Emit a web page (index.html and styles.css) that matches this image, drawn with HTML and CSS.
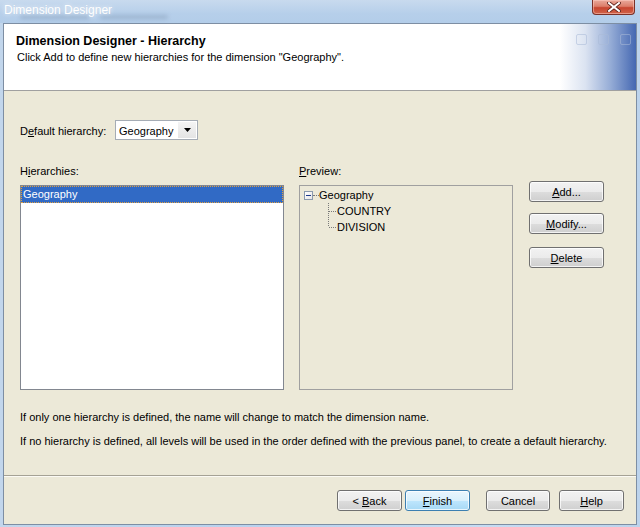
FILE: index.html
```html
<!DOCTYPE html>
<html>
<head>
<meta charset="utf-8">
<title>Dimension Designer</title>
<link rel="stylesheet" href="styles.css">
</head>
<body>
<div class="window">
  <div class="titlebar">
    <span class="title">Dimension Designer</span>
    <span class="ghost ghost-a"></span>
    <span class="ghost ghost-b"></span>
    <div class="close">
      <svg width="14" height="10" viewBox="0 0 14 10"><path d="M2 1 L12 9 M12 1 L2 9" stroke="#5a2018" stroke-width="3.6" stroke-linecap="square"/><path d="M2 1 L12 9 M12 1 L2 9" stroke="#ffffff" stroke-width="2" stroke-linecap="square"/></svg>
    </div>
  </div>
  <div class="client">
    <div class="header">
      <div class="h-title">Dimension Designer - Hierarchy</div>
      <div class="h-sub">Click Add to define new hierarchies for the dimension "Geography".</div>
      <div class="marks"><span></span><span></span><span></span></div>
    </div>
    <div class="body">
      <div class="default-row">
        <span class="label">D<u>e</u>fault hierarchy:</span>
        <div class="combo">
          <span class="combo-text">Geography</span>
          <span class="combo-btn"><svg width="7" height="4" viewBox="0 0 7 4"><path d="M0 0 H7 L3.5 4 Z" fill="#000"/></svg></span>
        </div>
      </div>
      <div class="panels">
        <div class="label lbl-list">H<u>i</u>erarchies:</div>
        <div class="label lbl-prev"><u>P</u>review:</div>
        <div class="side-btns">
          <button class="btn btn-add"><u>A</u>dd...</button>
          <button class="btn btn-modify"><u>M</u>odify...</button>
          <button class="btn btn-delete"><u>D</u>elete</button>
        </div>
        <div class="listbox">
          <div class="item selected">Geography</div>
        </div>
        <div class="tree">
          <div class="tree-root">
            <span class="expander"><span class="minus"></span></span>
            <span class="root-dots"></span>
            <span class="node-text">Geography</span>
          </div>
          <div class="tree-child">
            <svg class="conn" width="9" height="16" viewBox="0 0 9 16"><path d="M0.5 0 V16 M1 8.5 H9" stroke="#7a7a7a" stroke-width="1" stroke-dasharray="1 1" fill="none"/></svg>
            <span class="node-text">COUNTRY</span>
          </div>
          <div class="tree-child">
            <svg class="conn" width="9" height="16" viewBox="0 0 9 16"><path d="M0.5 0 V8 M1 8.5 H9" stroke="#7a7a7a" stroke-width="1" stroke-dasharray="1 1" fill="none"/></svg>
            <span class="node-text">DIVISION</span>
          </div>
        </div>
      </div>
      <p class="note note-1">If only one hierarchy is defined, the name will change to match the dimension name.</p>
      <p class="note note-2">If no hierarchy is defined, all levels will be used in the order defined with the previous panel, to create a default hierarchy.</p>
    </div>
    <div class="footer">
      <button class="btn btn-foot">&lt; <u>B</u>ack</button>
      <button class="btn btn-foot btn-default"><u>F</u>inish</button>
      <button class="btn btn-foot btn-cancel">Cancel</button>
      <button class="btn btn-foot btn-help"><u>H</u>elp</button>
    </div>
  </div>
</div>
</body>
</html>
```

FILE: styles.css
```css
* { box-sizing: border-box; }

html, body {
  margin: 0;
  padding: 0;
  width: 640px;
  height: 527px;
  overflow: hidden;
}

body {
  font-family: "Liberation Sans", Arial, sans-serif;
  font-size: 11px;
  color: #000;
}

.window {
  width: 640px;
  height: 527px;
  display: flex;
  flex-direction: column;
  background: linear-gradient(to right, #c2d6ec 0%, #b9d2ee 40%, #c6dcf3 75%, #bcd3ec 100%);
}

/* ---------- title bar ---------- */
.titlebar {
  position: relative;
  height: 23px;
  flex: none;
  display: flex;
  align-items: flex-start;
  background: linear-gradient(to bottom, #c8daee 0%, #b6cfea 60%, #b3cde9 100%);
}

.title {
  position: relative;
  z-index: 1;
  margin: 3px 0 0 4px;
  font-size: 12px;
  line-height: 15px;
  color: #ffffff;
  text-shadow: 0 0 4px rgba(255, 255, 255, 0.9), 0 0 1px rgba(160, 190, 220, 0.8);
}

.ghost {
  position: absolute;
  height: 4px;
  background: rgba(90, 110, 140, 0.28);
  filter: blur(2px);
  border-radius: 2px;
}
.ghost-a { left: 20px; top: 15px; width: 70px; }
.ghost-b { left: 100px; top: 15px; width: 68px; }

.close {
  margin-left: auto;
  margin-right: 5px;
  width: 43px;
  height: 15px;
  border: 1px solid #7a3128;
  border-top: none;
  border-radius: 0 0 4px 4px;
  background: linear-gradient(to bottom, #e9a99b 0%, #dc7e6a 45%, #c7452f 55%, #d0644a 100%);
  box-shadow: inset 0 0 0 1px rgba(255, 210, 200, 0.5);
  display: flex;
  align-items: center;
  justify-content: center;
}

/* ---------- client area ---------- */
.client {
  flex: 1;
  margin: 0 3px 2px 3px;
  border: 1px solid #7d8ea3;
  display: flex;
  flex-direction: column;
  background: #ece9d8;
}

.header {
  position: relative;
  height: 67px;
  flex: none;
  padding: 10px 0 0 12px;
  border-bottom: 1px solid #a0a0a0;
  background: linear-gradient(to right, #ffffff 0%, #ffffff 88%, #dbe3f1 92%, #95acd6 96%, #4568b2 100%);
}

.h-title {
  font-size: 12.5px;
  font-weight: bold;
  line-height: 15px;
}

.h-sub {
  margin-top: 1px;
  padding-left: 1px;
  line-height: 14px;
}

.marks {
  position: absolute;
  top: 10px;
  right: 5px;
  display: flex;
  gap: 11px;
}
.marks span {
  width: 11px;
  height: 11px;
  border: 1px solid rgba(170, 185, 215, 0.55);
  border-radius: 2px;
}

/* ---------- body ---------- */
.body {
  height: 385px;
  flex: none;
  padding: 29px 0 0 16px;
  border-bottom: 1px solid #a5a295;
}

.label { line-height: 14px; }

.default-row {
  display: flex;
  align-items: center;
  height: 20px;
}
.default-row .label {
  width: 95px;
  padding-top: 1px;
}

.combo {
  width: 83px;
  height: 20px;
  border: 1px solid #a5acb5;
  background: #fff;
  display: flex;
  align-items: center;
  padding: 1px 1px 0 3px;
}
.combo-text {
  flex: 1;
  line-height: 14px;
}
.combo-btn {
  width: 18px;
  height: 16px;
  background: linear-gradient(to bottom, #f4f4f4, #e4e4e4);
  display: flex;
  align-items: center;
  justify-content: center;
  margin-top: -1px;
}

.panels {
  margin-top: 24px;
  display: grid;
  grid-template-columns: 264px 214px 75px;
  grid-template-rows: 14px 205px;
  column-gap: 15px;
  row-gap: 7px;
}
.panels .lbl-list { grid-column: 1; grid-row: 1; }
.panels .lbl-prev { grid-column: 2; grid-row: 1; }

.side-btns {
  grid-column: 3;
  grid-row: 1 / span 2;
  margin-left: 1px;
  padding-top: 17px;
  display: flex;
  flex-direction: column;
}
.btn-modify { margin-top: 11px; }
.btn-delete { margin-top: 13px; }

.listbox {
  grid-column: 1;
  grid-row: 2;
  border: 1px solid #828790;
  background: #fff;
}

.item {
  height: 17px;
  line-height: 15px;
  padding-left: 1px;
}
.item.selected {
  background: #316ac5;
  color: #fff;
  border: 1px dotted #e0a040;
}

.tree {
  grid-column: 2;
  grid-row: 2;
  border: 1px solid #a0a0a0;
  background: #ece9d8;
}

.tree-root {
  height: 16px;
  display: flex;
  align-items: center;
  padding-left: 4px;
  margin-top: 1px;
}
.expander {
  width: 9px;
  height: 9px;
  border: 1px solid #8a9aae;
  background: linear-gradient(to bottom right, #ffffff, #e6e6e6);
  display: flex;
  align-items: center;
  justify-content: center;
}
.minus {
  width: 5px;
  height: 1px;
  background: #1c3a8c;
}
.root-dots {
  width: 6px;
  height: 1px;
  border-top: 1px dotted #7a7a7a;
  margin-top: 1px;
}
.node-text {
  line-height: 14px;
}

.tree-child {
  height: 16px;
  display: flex;
  align-items: center;
  padding-left: 28px;
}
.conn { display: block; flex: none; }

.note {
  margin: 0;
  line-height: 14px;
}
.note-1 { margin-top: 20px; }
.note-2 { margin-top: 10px; }

/* ---------- footer ---------- */
.footer {
  flex: 1;
  border-top: 1px solid #fbfaf4;
  padding: 13px 12px 0 0;
  display: flex;
  justify-content: flex-end;
  align-items: flex-start;
}

/* ---------- buttons ---------- */
.btn {
  font-family: inherit;
  font-size: 11px;
  color: #000;
  width: 75px;
  height: 21px;
  padding: 0;
  line-height: 14px;
  border: 1px solid #707070;
  border-radius: 3px;
  background: linear-gradient(to bottom, #f2f2f2 0%, #ebebeb 50%, #dddddd 51%, #cfcfcf 100%);
  box-shadow: inset 0 0 0 1px rgba(255, 255, 255, 0.75);
  text-align: center;
}

.btn-foot { width: 65px; }
.btn-default {
  margin-left: 3px;
  border-color: #3c7fb1;
  background: linear-gradient(to bottom, #eaf6fd 0%, #d9f0fc 50%, #bee6fd 51%, #a7d9f5 100%);
}
.btn-cancel { margin-left: 16px; width: 64px; }
.btn-help { margin-left: 9px; }
```
